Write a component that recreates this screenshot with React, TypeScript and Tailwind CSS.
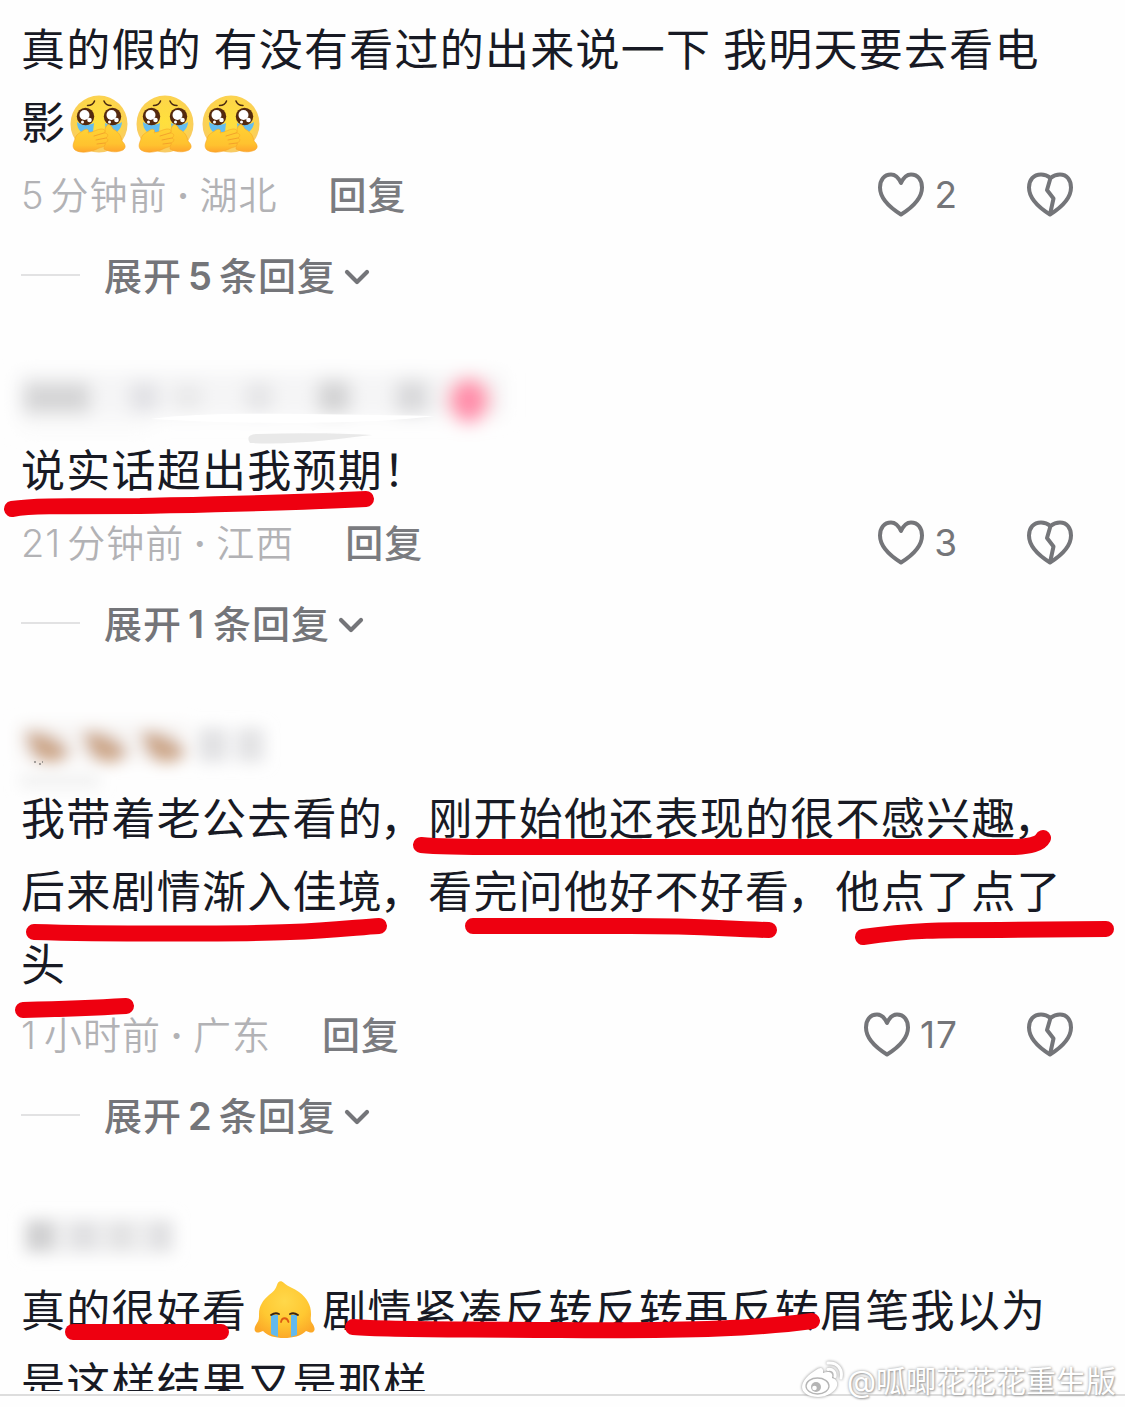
import type { ReactNode } from "react";

interface Comment {
  id: number;
  name?: ReactNode;
  lines: ReactNode[];
  time?: ReactNode;
  place?: string;
  likes?: number;
  replies?: number;
}

const TearyEmoji = () => (
  <svg className="w-[58px] h-[58px] mt-[2px] mr-2 shrink-0" viewBox="0 0 58 58">
    <defs>
      <radialGradient id="face" cx="50%" cy="45%" r="55%">
        <stop offset="0" stopColor="#ffe03c" />
        <stop offset="0.7" stopColor="#fdd648" />
        <stop offset="1" stopColor="#f8ca68" />
      </radialGradient>
      <linearGradient id="hand" x1="0" y1="0" x2="0" y2="1">
        <stop offset="0" stopColor="#ffd234" />
        <stop offset="0.7" stopColor="#ffc22f" />
        <stop offset="1" stopColor="#ffa52c" />
      </linearGradient>
    </defs>
    <circle cx="29" cy="29" r="28.5" fill="url(#face)" />
    <path d="M17.500 10.500c3.500 0 6-1.500 7-4.500M41 10.500c-3.500 0-6-1.500-7-4.500" fill="none" stroke="#4b2a12" strokeWidth="1.500" strokeLinecap="round" />
    <path d="M7 27c4 3 12 4 17 1l-1 9H11c-3-3-4-6-4-10zM52 27c-4 3-12 4-17 1l1 9h11c3-3 5-6 5-10z" fill="#63bdf0" />
    <circle cx="15.500" cy="21.500" r="8.700" fill="#54290f" />
    <circle cx="42.500" cy="21.500" r="8.700" fill="#54290f" />
    <circle cx="14.500" cy="20" r="5" fill="#fff" />
    <circle cx="19.500" cy="25" r="2.300" fill="#fff" />
    <circle cx="12.500" cy="27" r="1.500" fill="#fff" />
    <circle cx="41.500" cy="20" r="5" fill="#fff" />
    <circle cx="46.500" cy="25" r="2.300" fill="#fff" />
    <circle cx="39.500" cy="27" r="1.500" fill="#fff" />
    <path d="M35 34C37 28 40 28 43 34 49 37 51 41 52 46 56 50 56 53 53 55 47 58 39 57 34 54z" fill="url(#hand)" stroke="#f7a626" strokeWidth="0.600" />
    <path d="M5 55C2 52 3 49 5 44 6 39 10 38 14 35 17 33 20 35 18 38 23 37 28 34 31 34 35 34 36 36 34 38 38 38 39 41 36 43 39 44 38 47 35 48 36 51 33 52 29 53 22 57 11 59 5 55z" fill="url(#hand)" stroke="#f7a626" strokeWidth="0.600" />
    <path d="M24 41l10-3M26 45l10-2M27 49l8-1" stroke="#f0982a" strokeWidth="0.800" strokeLinecap="round" />
  </svg>
);

const DropEmoji = () => (
  <svg className="w-[61px] h-[58px] mx-[7px] -mt-[2px] shrink-0" viewBox="0 0 61 58">
    <defs>
      <radialGradient id="drop" cx="50%" cy="35%" r="65%">
        <stop offset="0" stopColor="#ffd84a" />
        <stop offset="0.600" stopColor="#ffc832" />
        <stop offset="1" stopColor="#fca928" />
      </radialGradient>
    </defs>
    <path d="M23 4C24 0 27-1 30 2 34 6 40 7 45 11 53 17 57 24 57 33 57 37 56 39 58 42 61 46 61 49 60 50 58 53 55 51 52 50 47 55 39 57 30 57S14 55 9 50C6 51 3 53 1 50 0 48 1 45 3 42 5 39 5 37 5 33 5 25 9 19 15 14 19 11 22 8 23 4z" fill="url(#drop)" />
    <path d="M17 34h7v22l-5-2-2-1zM37 34h6v20l-6 2z" fill="#62b9ee" />
    <path d="M17 34c3-2 6-2 8-1M36 33c2-1 5-1 8 1" fill="none" stroke="#3d2411" strokeWidth="1.800" strokeLinecap="round" />
    <path d="M27 41c1-5 6-5 7.500 0" fill="none" stroke="#dd5b12" strokeWidth="1.800" strokeLinecap="round" />
  </svg>
);

const Heart = () => (
  <svg className="w-[48px] h-[46px] -mt-[3px]" viewBox="0 0 48 46" fill="none" stroke="#747579" strokeWidth="4" strokeLinejoin="round">
    <path d="M24 12C21.500 6.500 18.500 3.500 14 3.500 7 3.500 3 9 3 16.500 3 27 12 36 24 43.500 36 36 45 27 45 16.500 45 9 41 3.500 34 3.500 29.500 3.500 26.500 6.500 24 12z" />
  </svg>
);

const BrokenHeart = () => (
  <svg className="w-[48px] h-[46px] -mt-[3px]" viewBox="0 0 48 46" fill="none" stroke="#747579" strokeWidth="4" strokeLinejoin="round">
    <path d="M24.500 7C21.500 4.500 18.500 3.500 15 3.500 7.500 3.500 3 9 3 16.500 3 27 12 36 24 43.500 36 36 45 27 45 16.500 45 9 41 3.500 34 3.500 30.500 3.500 27.500 4.500 24.500 7z" />
    <path d="M24.500 7l-3.500 12 6.500 8.500-3.500 16" />
  </svg>
);

const Chevron = () => (
  <svg className="w-[26px] h-[18px] ml-[8px] mt-[2px]" viewBox="0 0 26 18" fill="none" stroke="#747579" strokeWidth="4.200" strokeLinecap="round" strokeLinejoin="round">
    <path d="M3 4l10 10L23 4" />
  </svg>
);

const NameOne = () => (
  <svg className="w-[540px] h-[92px]" viewBox="0 0 540 92">
    <defs>
      <filter id="soft" x="-30%" y="-60%" width="160%" height="220%">
        <feGaussianBlur stdDeviation="9" />
      </filter>
    </defs>
    <g filter="url(#soft)">
      <rect x="18" y="14" width="486" height="44" fill="#f5f5f6" />
      <rect x="24" y="24" width="66" height="30" fill="#d4d4d5" />
      <rect x="130" y="24" width="28" height="28" fill="#e0e0e4" />
      <rect x="174" y="25" width="28" height="26" fill="#e9e9ea" />
      <rect x="246" y="24" width="26" height="28" fill="#e4e4e6" />
      <rect x="318" y="22" width="32" height="32" fill="#d2d2d3" />
      <rect x="396" y="22" width="32" height="32" fill="#d8d8da" />
      <ellipse cx="469" cy="41" rx="21" ry="22" fill="#ff8fab" />
      <rect x="20" y="62" width="130" height="10" fill="#f9f9f9" />
    </g>
    <path d="M250 84c-4-6 0-9 8-9 40-1 80-1 114 1-35 4-75 10-122 8z" fill="#dfdfdf" opacity="0.700" />
    <path d="M150 60c60-8 150-5 285-3-60 8-180 9-285 3z" fill="#fff" />
  </svg>
);

const NameTwo = () => (
  <svg className="w-[300px] h-[92px]" viewBox="0 0 300 92">
    <defs>
      <filter id="soft2" x="-30%" y="-60%" width="160%" height="220%">
        <feGaussianBlur stdDeviation="7.500" />
      </filter>
    </defs>
    <g filter="url(#soft2)">
      <rect x="18" y="16" width="170" height="38" fill="#f7f5f4" />
      <path d="M24 26c18-6 42 8 46 20-8 14-32 10-38 2zM82 26c18-6 42 8 46 20-8 14-32 10-38 2zM140 26c18-6 42 8 46 20-8 14-32 10-38 2z" fill="#cda88b" />
      <rect x="198" y="21" width="30" height="34" fill="#e2e2e4" />
      <rect x="236" y="21" width="28" height="34" fill="#e3e3e5" />
      <rect x="20" y="68" width="80" height="12" fill="#efefef" />
    </g>
    <path d="M34 55h2M39 57h2M42 55h1" stroke="#555" strokeWidth="1" />
  </svg>
);

const NameThree = () => (
  <svg className="w-[220px] h-[92px]" viewBox="0 0 220 92">
    <g filter="url(#soft2)">
      <rect x="24" y="19" width="150" height="36" fill="#eeeeef" />
      <rect x="26" y="22" width="28" height="30" fill="#d0d0d1" />
      <rect x="72" y="23" width="24" height="28" fill="#e0e0e2" />
      <rect x="110" y="23" width="22" height="28" fill="#e2e2e3" />
      <rect x="150" y="23" width="22" height="28" fill="#e0e0e2" />
    </g>
  </svg>
);

const Comma = () => <span className="-ml-[3px] mr-[3px]">，</span>;

const comments: Comment[] = [
  {
    id: 1,
    lines: [
      "真的假的 有没有看过的出来说一下 我明天要去看电",
      <>
        <span className="mr-1">影</span>
        <TearyEmoji />
        <TearyEmoji />
        <TearyEmoji />
      </>,
    ],
    time: <><span className="mr-[6px]">5</span>分钟前</>,
    place: "湖北",
    likes: 2,
    replies: 5,
  },
  {
    id: 2,
    name: <NameOne />,
    lines: ["说实话超出我预期！"],
    time: <><span className="mr-[6px]">21</span>分钟前</>,
    place: "江西",
    likes: 3,
    replies: 1,
  },
  {
    id: 3,
    name: <NameTwo />,
    lines: [
      <>我带着老公去看的<Comma />刚开始他还表现的很不感兴趣<Comma /></>,
      <>后来剧情渐入佳境<Comma />看完问他好不好看<Comma />他点了点了</>,
      "头",
    ],
    time: <><span className="mr-[7px]">1</span>小时前</>,
    place: "广东",
    likes: 17,
    replies: 2,
  },
  {
    id: 4,
    name: <NameThree />,
    lines: [
      <>
        真的很好看
        <DropEmoji />
        剧情紧凑反转反转再反转眉笔我以为
      </>,
      "是这样结果又是那样",
    ],
  },
];

const CommentItem = ({ comment }: { comment: Comment }) => (
  <article>
    {comment.name && <div className="h-[113px] pt-[38px] -ml-[21px]">{comment.name}</div>}
    {comment.lines.map((line, i) => (
      <p key={i} className="flex items-center h-[73px] text-[44px] tracking-[1.25px] [word-spacing:-2px] text-[#181a24] whitespace-pre">
        {line}
      </p>
    ))}
    {comment.time && (
      <div className={`flex items-center h-[72px] text-[38px] tracking-[1px] ${comment.lines.length > 2 ? "-mt-[2px]" : ""}`}>
        <span className="font-[350] text-[#b2b2b5] whitespace-nowrap">
          {comment.time}
          <span className="inline-block w-[32px] text-center font-semibold">·</span>
          {comment.place}
        </span>
        <button className="ml-[51px] font-medium text-[#7a7b7f] tracking-[1px]">回复</button>
        <div className="ml-auto mr-[51px] flex items-center">
          <Heart />
          <span className="ml-[9px] mr-[68px] text-[37px] tracking-[1px] text-[#747579]">{comment.likes}</span>
          <BrokenHeart />
        </div>
      </div>
    )}
    {comment.replies && (
      <div className="flex items-center h-[90px] text-[38px] font-medium tracking-[1px] text-[#747579]">
        <span className="w-[59px] h-[2px] mr-[24px] -mt-[2px] bg-[#e2e2e3]" />
        展开
        <span className="min-w-[19px] mx-[6px] font-semibold">{comment.replies}</span>
        条回复
        <Chevron />
      </div>
    )}
  </article>
);

const Marks = () => (
  <svg className="absolute inset-0 w-[1125px] h-[1407px] pointer-events-none" viewBox="0 0 1125 1407" fill="none" stroke="#ee0010" strokeWidth="16" strokeLinecap="round" strokeLinejoin="round">
    <path d="M12 509C30 506 50 506 140 506C230 504 290 503 366 499" />
    <path d="M421 845C450 848 480 847 560 847H1015C1030 846 1040 844 1043 838" />
    <path d="M34 932C100 934 240 934 290 932C330 931 360 927 379 926" />
    <path d="M473 926H630C710 926 720 929 769 930" />
    <path d="M863 937C910 930 940 930 1000 930L1106 929" />
    <path d="M23 1010C60 1009 90 1008 126 1006" />
    <path d="M73 1332L100 1332H221" />
    <path d="M353 1327C390 1330 440 1329 560 1330C700 1331 760 1328 812 1321" />
  </svg>
);

const Watermark = () => (
  <div className="absolute right-[9px] bottom-[3px] flex items-center h-[46px] text-[30px] text-white whitespace-nowrap [text-shadow:0_0_3px_#999,1px_1px_2px_#aaa]">
    <svg className="w-[44px] h-[38px] mr-[3px] mb-[3px] drop-shadow-[0_0_1.5px_#888]" viewBox="0 0 44 38">
      <path d="M16 9c4-3 8-3 7 3 5-2 11-1 9 5 4 1 6 4 5 8-2 6-10 11-19 11C9 36 2 32 2 26c0-6 7-13 14-17z" fill="#fff" />
      <ellipse cx="17.500" cy="25" rx="11.500" ry="8" fill="#fff" stroke="#b5b5b5" strokeWidth="1.300" />
      <circle cx="16" cy="26" r="5" fill="#b5b5b5" />
      <circle cx="14.500" cy="27" r="2.300" fill="#fff" />
      <path d="M28 2c9-1 15 6 13 15M28 8.500c4-1 8 2 7 7" fill="none" stroke="#fff" strokeWidth="3" strokeLinecap="round" />
    </svg>
    @呱唧花花花重生版
  </div>
);

const App = () => {
  return (
    <main className="relative w-[1125px] h-[1407px] overflow-hidden bg-[#fefefe] font-['Inter','Noto_Sans_CJK_SC',sans-serif]">
      <section className="h-[1391px] pt-[13px] pl-[21px] overflow-hidden">
        {comments.map((comment) => (
          <CommentItem key={comment.id} comment={comment} />
        ))}
      </section>
      <div className="h-[2px] mt-[3px] bg-[#dddddd]" />
      <Marks />
      <Watermark />
    </main>
  );
};

export default App;
